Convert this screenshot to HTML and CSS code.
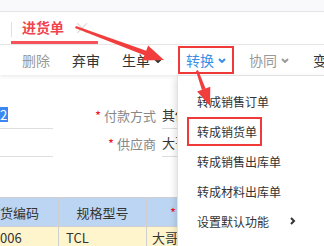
FILE: index.html
```html
<!DOCTYPE html>
<html lang="zh-CN">
<head>
    <meta charset="UTF-8">
    <title>进货单</title>
    <link rel="stylesheet" href="styles.css">
</head>
<body>
<div class="page">
    <div class="topbar"></div>

    <!-- tabs -->
    <div class="tabs">
        <div class="tab"><span class="tab-title">进货单</span><span class="tab-close">×</span></div>
    </div>

    <!-- toolbar -->
    <div class="toolbar">
        <span class="tool muted">删除</span><span class="sep"></span>
        <span class="tool">弃审</span><span class="sep"></span>
        <span class="tool drop">生单<svg class="caret" viewBox="0 0 8 5"><polyline points="1,1 4,4 7,1"/></svg></span>
        <span class="tool drop active">转换<svg class="caret" viewBox="0 0 8 5"><polyline points="1,1 4,4 7,1"/></svg></span>
        <span class="tool drop muted">协同<svg class="caret" viewBox="0 0 8 5"><polyline points="1,1 4,4 7,1"/></svg></span><span class="sep"></span>
        <span class="tool">变更</span>
    </div>

    <!-- form -->
    <div class="form">
        <div class="cut"><span class="selected">2</span></div>
        <div class="label"><i>*</i>付款方式</div>
        <div class="field">其他</div>

        <div class="cut"></div>
        <div class="label"><i>*</i>供应商</div>
        <div class="field">大哥</div>
    </div>

    <!-- grid -->
    <table class="grid">
        <tr class="head">
            <th class="c1">货编码</th>
            <th class="c2">规格型号</th>
            <th class="c3"><i>*</i>：数量</th>
        </tr>
        <tr class="row">
            <td class="c1">006</td>
            <td class="c2">TCL</td>
            <td class="c3">大哥</td>
        </tr>
    </table>

    <!-- dropdown of 转换 -->
    <ul class="menu">
        <li>转成销售订单</li>
        <li><span class="mark">转成销货单</span></li>
        <li>转成销售出库单</li>
        <li>转成材料出库单</li>
        <li class="sub">设置默认功能<svg class="chev" viewBox="0 0 6 8"><polyline points="1,1 4,4 1,7"/></svg></li>
    </ul>

    <!-- annotation arrows -->
    <svg class="marks" viewBox="0 0 324 246">
        <polygon points="76,26 146.2,50.7 148.1,45.5 164,60 142.5,60.5 144.4,55.3 75,28"/>
        <polygon points="196,71 201.8,89.8 210.3,86.7 210,106 197.1,91.5 205.6,88.4 198,70"/>
    </svg>
</div>
</body>
</html>
```

FILE: styles.css
```css
body {
    margin: 0;
    font-family: "Noto Sans CJK SC", "Liberation Sans", sans-serif;
    color: #333;
    background: #fff;
    overflow: hidden;
}
.page {
    position: relative;
    width: 324px;
    height: 246px;
    overflow: hidden;
}
.topbar {
    height: 11px;
    background: #f9f9fb;
    border-bottom: 1px solid #e4e4ea;
}
.tabs {
    height: 32px;
    border-bottom: 1px solid #e6e6e6;
    display: flex;
}
.tab {
    margin-left: 11px;
    width: 87px;
    box-sizing: border-box;
    padding-left: 11px;
    display: flex;
    align-items: center;
    border-bottom: 3px solid #f5525a;
    position: relative;
}
.tab::before {
    content: "";
    position: absolute;
    left: 0;
    top: 10px;
    height: 15px;
    border-left: 1px solid #e0e0e0;
}
.tab-title {
    color: #f0444d;
    font-size: 14px;
    font-weight: bold;
}
.tab-close {
    margin-left: 10px;
    color: #cfcfcf;
    font-size: 16px;
    font-weight: 300;
}
.toolbar {
    height: 30px;
    display: flex;
    align-items: center;
    padding-left: 11px;
    font-size: 14px;
    box-shadow: 0 2px 3px rgba(0, 0, 0, 0.07);
}
.tool {
    padding: 0 11px;
    display: flex;
    align-items: center;
    white-space: nowrap;
    color: #333;
}
.tool.muted {
    color: #999;
}
.sep {
    width: 1px;
    height: 15px;
    background: #dcdcdc;
}
.caret {
    width: 8px;
    height: 5px;
    margin-left: 4px;
    fill: none;
    stroke: currentColor;
    stroke-width: 2;
}
.tool.active {
    color: #3a8ee6;
    margin-left: 5px;
    padding: 0 6px;
    height: 24px;
    border: 2px solid #f03a3a;
}
.tool.active + .tool {
    margin-left: 4px;
    padding-right: 13px;
}
.form {
    display: grid;
    grid-template-columns: 53px 103px 1fr;
    grid-auto-rows: 28px;
    padding-top: 26px;
    font-size: 13px;
}
.cut {
    border-bottom: 1px solid #dedede;
    display: flex;
    align-items: center;
}
.selected {
    background: #3d87f3;
    color: #fff;
    line-height: 15px;
    padding-right: 1px;
}
.label {
    display: flex;
    align-items: center;
    justify-content: flex-end;
    color: #888;
}
.label i, .grid i {
    color: #e8112d;
    font-style: normal;
    margin-right: 3px;
}
.field {
    margin-left: 6px;
    border-bottom: 1px solid #dedede;
    display: flex;
    align-items: center;
}
.grid {
    margin-top: 40px;
    border-collapse: collapse;
    font-size: 13px;
    width: 324px;
    table-layout: fixed;
}
.grid th, .grid td {
    border: 1px solid #cfcfcf;
    border-left: none;
    white-space: nowrap;
    overflow: hidden;
    font-weight: normal;
}
.grid .c1 { width: 58px; text-align: left; padding: 0; }
.grid .c2 { width: 85px; }
.grid .c3 { padding-left: 5px; text-align: left; }
.grid .head .c3 { padding-left: 23px; }
.grid .head {
    height: 29px;
    background: #bcd5f2;
}
.grid .row {
    height: 22px;
    background: #fff5cc;
}
.grid .row .c2 {
    text-align: left;
    padding-left: 7px;
}
.menu {
    position: absolute;
    left: 177px;
    top: 75px;
    width: 160px;
    height: 190px;
    margin: 0;
    padding: 10px 0 0;
    list-style: none;
    background: #fff;
    border: 1px solid #e2e2e2;
    box-shadow: -2px 3px 6px rgba(0, 0, 0, 0.12);
    font-size: 12px;
}
.menu li {
    height: 30px;
    padding-left: 19px;
    display: flex;
    align-items: center;
    color: #333;
}
.menu .mark {
    margin-left: -10px;
    padding: 4px 3px 4px 8px;
    border: 2px solid #f03a3a;
}
.menu .sub {
    justify-content: space-between;
    padding-right: 42px;
}
.chev {
    width: 6px;
    height: 8px;
    fill: none;
    stroke: #333;
    stroke-width: 2;
}
.marks {
    position: absolute;
    left: 0;
    top: 0;
    width: 324px;
    height: 246px;
    pointer-events: none;
    fill: #f23d3d;
}
```
